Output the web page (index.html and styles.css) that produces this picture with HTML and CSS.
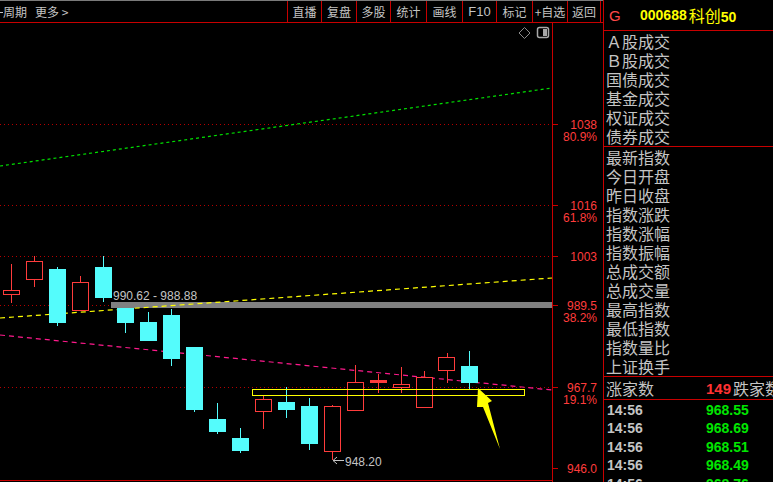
FILE: index.html
```html
<!DOCTYPE html>
<html>
<head>
<meta charset="utf-8">
<link rel="stylesheet" href="styles.css">
</head>
<body>
<div class="app">
  <div class="main">
    <div class="toolbar">
      <div class="tb-left">
        <span class="dash"></span><span class="period">周期</span><span class="more">更多 &gt;</span>
      </div>
      <div class="tb-btns">
        <span class="btn w34">直播</span>
        <span class="btn w35">复盘</span>
        <span class="btn w34">多股</span>
        <span class="btn w36">统计</span>
        <span class="btn w36">画线</span>
        <span class="btn w34 latin">F10</span>
        <span class="btn w36">标记</span>
        <span class="btn w35">+自选</span>
        <span class="btn w33">返回</span>
      </div>
    </div>
    <svg class="chart" width="603" height="459" viewBox="0 23 603 459" xmlns="http://www.w3.org/2000/svg">
      <g class="grid">
        <line x1="0" y1="124.5" x2="551" y2="124.5"/>
        <line x1="0" y1="205.5" x2="551" y2="205.5"/>
        <line x1="0" y1="256.5" x2="551" y2="256.5"/>
        <line x1="0" y1="305.5" x2="551" y2="305.5"/>
        <line x1="0" y1="387.5" x2="551" y2="387.5"/>
      </g>
      <line class="axisline" x1="0" y1="480.5" x2="552" y2="480.5"/>
      <rect x="111" y="302" width="441" height="6" fill="#808080"/>
      <line class="axisline" x1="552.5" y1="23" x2="552.5" y2="482"/>
      <g class="ticks">
        <line x1="553" y1="124.5" x2="558" y2="124.5"/>
        <line x1="553" y1="205.5" x2="558" y2="205.5"/>
        <line x1="553" y1="256.5" x2="558" y2="256.5"/>
        <line x1="553" y1="305.5" x2="558" y2="305.5"/>
        <line x1="553" y1="387.5" x2="558" y2="387.5"/>
        <line x1="553" y1="468.5" x2="558" y2="468.5"/>
      </g>
      <g class="axislabels">
        <text x="597" y="129">1038</text>
        <text x="597" y="141">80.9%</text>
        <text x="597" y="210">1016</text>
        <text x="597" y="222">61.8%</text>
        <text x="597" y="261">1003</text>
        <text x="597" y="310">989.5</text>
        <text x="597" y="322">38.2%</text>
        <text x="597" y="392">967.7</text>
        <text x="597" y="404">19.1%</text>
        <text x="597" y="473">946.0</text>
      </g>
      <line class="green" x1="0" y1="166" x2="552" y2="88"/>
      <line class="yellowd" x1="0" y1="318" x2="552" y2="278"/>
      <line class="pink" x1="0" y1="335" x2="552" y2="390"/>
      <text class="note" x="113" y="299.5">990.62 - 988.88</text>

      <g class="up">
        <line x1="11.5" y1="264" x2="11.5" y2="303"/><rect x="3.5" y="290.5" width="16" height="4"/>
        <line x1="34.5" y1="256" x2="34.5" y2="287"/><rect x="26.5" y="261.5" width="16" height="18"/>
        <line x1="80.5" y1="276" x2="80.5" y2="310"/><rect x="72.5" y="282.5" width="16" height="28"/>
        <line x1="263.5" y1="395" x2="263.5" y2="429"/><rect x="255.5" y="399.5" width="16" height="12"/>
        <line x1="332.5" y1="405" x2="332.5" y2="460"/><rect x="324.5" y="406.5" width="16" height="45"/>
        <line x1="355.5" y1="365" x2="355.5" y2="410"/><rect x="347.5" y="382.5" width="16" height="28"/>
        <line x1="378.5" y1="374" x2="378.5" y2="393"/>
        <line x1="401.5" y1="367" x2="401.5" y2="393"/><rect x="393.5" y="384.5" width="16" height="3"/>
        <line x1="424.5" y1="371" x2="424.5" y2="408"/><rect x="416.5" y="377.5" width="16" height="30"/>
        <line x1="447.5" y1="353" x2="447.5" y2="383"/><rect x="438.5" y="357.5" width="16" height="13"/>
      </g>
      <rect x="370" y="380" width="17" height="3" fill="#ff3c3c"/>
      <g class="down">
        <line x1="57.5" y1="267" x2="57.5" y2="326"/><rect x="49" y="269" width="17" height="54"/>
        <line x1="103.5" y1="256" x2="103.5" y2="302"/><rect x="95" y="267" width="17" height="31"/>
        <line x1="125.5" y1="308" x2="125.5" y2="333"/><rect x="117" y="308" width="17" height="15"/>
        <line x1="148.5" y1="312" x2="148.5" y2="341"/><rect x="140" y="322" width="17" height="19"/>
        <line x1="171.5" y1="309" x2="171.5" y2="366"/><rect x="163" y="315" width="17" height="44"/>
        <line x1="194.5" y1="347" x2="194.5" y2="412"/><rect x="186" y="347" width="17" height="63"/>
        <line x1="217.5" y1="403" x2="217.5" y2="434"/><rect x="209" y="419" width="17" height="13"/>
        <line x1="240.5" y1="428" x2="240.5" y2="453"/><rect x="232" y="438" width="17" height="13"/>
        <line x1="286.5" y1="387" x2="286.5" y2="418"/><rect x="278" y="402" width="17" height="8"/>
        <line x1="309.5" y1="398" x2="309.5" y2="450"/><rect x="301" y="406" width="17" height="38"/>
        <line x1="469.5" y1="351" x2="469.5" y2="389"/><rect x="461" y="366" width="17" height="17"/>
      </g>

      <rect class="ybox" x="252.5" y="389.5" width="272" height="6"/>
      <polygon fill="#ffff00" points="478,388 492,401 488,403 500,449 483,407 477,407"/>

      <g class="ann">
        <line x1="333" y1="460.5" x2="344" y2="460.5"/>
        <line x1="333" y1="460.5" x2="337" y2="457"/>
        <line x1="333" y1="460.5" x2="337" y2="464"/>
      </g>
      <text class="note" x="345" y="466">948.20</text>

      <polygon class="icon" points="524.5,27.5 530,33 524.5,38.5 519,33"/>
      <rect class="icon2" x="537.5" y="27.5" width="11" height="10" rx="2"/>
      <rect x="543" y="29" width="4" height="7" fill="#a8a8a8"/>
    </svg>
  </div>
  <div class="panel">
    <div class="head">
      <span class="g">G</span><span class="code">000688</span><span class="name">科创<b>50</b></span>
    </div>
    <div class="list first">
      <div class="row">Ａ股成交</div>
      <div class="row">Ｂ股成交</div>
      <div class="row">国债成交</div>
      <div class="row">基金成交</div>
      <div class="row">权证成交</div>
      <div class="row">债券成交</div>
    </div>
    <div class="list">
      <div class="row">最新指数</div>
      <div class="row">今日开盘</div>
      <div class="row">昨日收盘</div>
      <div class="row">指数涨跌</div>
      <div class="row">指数涨幅</div>
      <div class="row">指数振幅</div>
      <div class="row">总成交额</div>
      <div class="row">总成交量</div>
      <div class="row">最高指数</div>
      <div class="row">最低指数</div>
      <div class="row">指数量比</div>
      <div class="row">上证换手</div>
    </div>
    <div class="updown">
      <span class="ud-label">涨家数</span><span class="ud-num">149</span><span class="ud-label2">跌家数</span>
    </div>
    <div class="ticks-list">
      <div class="trow"><span class="time">14:56</span><span class="val">968.55</span></div>
      <div class="trow"><span class="time">14:56</span><span class="val">968.69</span></div>
      <div class="trow"><span class="time">14:56</span><span class="val">968.51</span></div>
      <div class="trow"><span class="time">14:56</span><span class="val">968.49</span></div>
      <div class="trow"><span class="time">14:56</span><span class="val">968.76</span></div>
    </div>
  </div>
</div>
</body>
</html>
```
FILE: styles.css
```css
* { box-sizing: border-box; }
html, body {
  margin: 0;
  padding: 0;
  background: #000;
  width: 773px;
  height: 482px;
  overflow: hidden;
}
.app {
  display: flex;
  width: 773px;
  height: 482px;
  font-family: "Noto Sans CJK SC", "Liberation Sans", sans-serif;
  color: #c4c4c4;
}
.main {
  width: 603px;
  display: flex;
  flex-direction: column;
}
.toolbar {
  height: 23px;
  border-top: 1px solid #7a7a7a;
  border-bottom: 1px solid #c80000;
  display: flex;
  font-size: 12px;
  line-height: 21px;
}
.tb-left {
  display: flex;
  align-items: center;
}
.dash {
  width: 3px;
  height: 1px;
  background: #c4c4c4;
  margin-top: 1px;
}
.period { margin-left: 0; }
.more { margin-left: 8px; }
.tb-btns {
  margin-left: auto;
  margin-right: 2px;
  display: flex;
  border-right: 1px solid #c80000;
}
.btn {
  border-left: 1px solid #c80000;
  text-align: center;
  white-space: nowrap;
}
.btn.latin { font-family: "Liberation Sans", sans-serif; font-size: 13px; }
.w33 { width: 33px; }
.w34 { width: 34px; }
.w35 { width: 35px; }
.w36 { width: 36px; }
.chart { display: block; }
.grid line {
  stroke: #b40000;
  stroke-width: 1;
  stroke-dasharray: 1 3;
}
.axisline { stroke: #c80000; stroke-width: 1; }
.ticks line { stroke: #c80000; stroke-width: 1; }
.axislabels text {
  fill: #ff3c3c;
  font-family: "Liberation Sans", sans-serif;
  font-size: 12px;
  text-anchor: end;
}
.green { stroke: #00e000; stroke-width: 1.2; stroke-dasharray: 3 3; }
.yellowd { stroke: #ffff00; stroke-width: 1.2; stroke-dasharray: 5 4; }
.pink { stroke: #ff1a8c; stroke-width: 1.2; stroke-dasharray: 5 4; }
.note {
  fill: #c4c4c4;
  font-family: "Liberation Sans", sans-serif;
  font-size: 12px;
}
.up line { stroke: #ff3c3c; stroke-width: 1; }
.up rect { fill: #000; stroke: #ff3c3c; stroke-width: 1; }
.down line { stroke: #54fcfc; stroke-width: 1; }
.down rect { fill: #54fcfc; }
.ybox { fill: none; stroke: #ffff00; stroke-width: 1; }
.ann line { stroke: #c4c4c4; stroke-width: 1; }
.icon { fill: none; stroke: #8a8a8a; stroke-width: 1; }
.icon2 { fill: none; stroke: #a8a8a8; stroke-width: 1.5; }

.panel {
  width: 170px;
  height: 482px;
  border-left: 1px solid #c80000;
  overflow: hidden;
}
.head {
  height: 31px;
  border-bottom: 1px solid #c80000;
  display: flex;
  align-items: center;
  padding-left: 5px;
  font-family: "Liberation Sans", sans-serif;
  font-weight: bold;
  font-size: 14px;
}
.g { color: #ff4a4a; font-weight: normal; font-size: 15px; width: 31px; flex-shrink: 0; }
.code { color: #ffff00; flex-shrink: 0; }
.name {
  color: #ffff00;
  margin-left: 2px;
  font-family: "Noto Sans CJK SC", sans-serif;
  font-weight: normal;
  font-size: 16px;
  flex-shrink: 0;
}
.name b { font-family: "Liberation Sans", sans-serif; font-weight: bold; font-size: 14px; }
.list {
  border-bottom: 1px solid #c80000;
  padding-top: 1px;
}
.row {
  height: 19px;
  line-height: 19px;
  font-size: 16px;
  padding-left: 2px;
  white-space: nowrap;
}
.updown {
  height: 23px;
  border-bottom: 1px solid #c80000;
  display: flex;
  align-items: center;
  padding-left: 2px;
  font-size: 16px;
  white-space: nowrap;
  overflow: hidden;
}
.ud-label { width: 100px; flex-shrink: 0; }
.ud-num {
  color: #ff3232;
  font-family: "Liberation Sans", sans-serif;
  font-weight: bold;
  font-size: 15px;
  width: 27px;
  flex-shrink: 0;
}
.ud-label2 { flex-shrink: 0; }
.ticks-list { padding-top: 1px; }
.trow {
  height: 18.4px;
  line-height: 18.4px;
  display: flex;
  padding-left: 3px;
  font-family: "Liberation Sans", sans-serif;
  font-weight: bold;
  font-size: 14px;
}
.time { width: 99px; color: #c4c4c4; flex-shrink: 0; }
.val { color: #00e600; flex-shrink: 0; }
```
